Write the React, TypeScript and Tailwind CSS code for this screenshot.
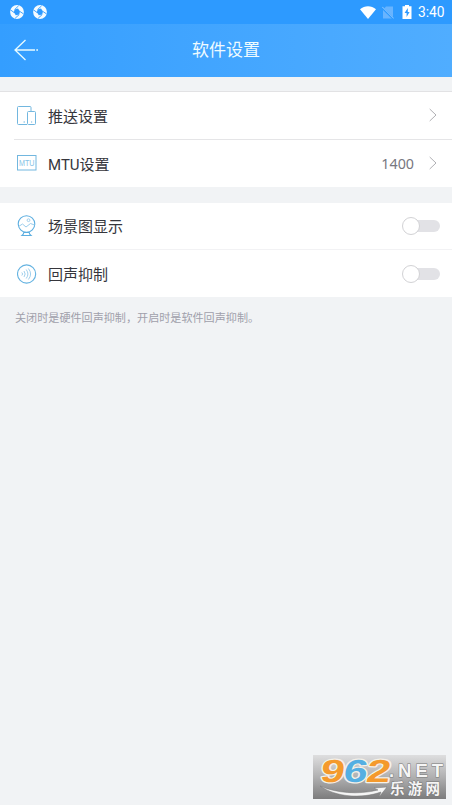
import type { ReactNode } from "react";

function SpinnerMark() {
  return (
    <svg width="14" height="14" viewBox="0 0 14 14">
      <circle cx="7" cy="7" r="6.9" fill="#f4fbff" />
      <path d="M4.6 4.4 8 3.6 10 6.6 9.2 9.6 5.8 10.2 3.9 7.3Z" fill="#2e9aff" />
      <path d="M4.6 4.6 8.6 .8M9.8 6.4 13.4 8.8M9.2 9.6 5.2 13.2M4 7.4.6 5" stroke="#2e9aff" strokeWidth=".9" fill="none" />
    </svg>
  );
}

function StatusBar() {
  return (
    <div className="flex h-6 items-center justify-between bg-[#2d9aff] pl-[10px] pr-[7px]">
      <div className="flex gap-[9px]">
        <SpinnerMark />
        <SpinnerMark />
      </div>
      <div className="flex items-center">
        <svg className="mr-[6px]" width="16" height="13" viewBox="0 0 16 13">
          <path d="M0 3.2C4.6-.9 11.4-.9 16 3.2L8 13Z" fill="white" />
        </svg>
        <svg className="mr-[8px]" width="12" height="13" viewBox="0 0 12 13">
          <path d="M4 .5H11V12.5H1V4Z" fill="#68b4ff" />
          <path d="M0 1.5 11.5 13" stroke="#2d9aff" strokeWidth="2" />
          <path d="M.2 .8 11.8 12.5" stroke="#91c9ff" strokeWidth="1" />
        </svg>
        <svg className="mr-[6px]" width="10" height="14" viewBox="0 0 10 14">
          <path d="M3 0H7V1.3H9.5V14H.5V1.3H3Z" fill="white" />
          <path d="M5.8 3 2.6 8H4.6V12L7.6 7H5.8Z" fill="#2d9aff" />
        </svg>
        <span className="w-[27px] whitespace-nowrap font-['Roboto',sans-serif] text-[13.8px] leading-6 text-white">3:40</span>
      </div>
    </div>
  );
}

function Header() {
  return (
    <header className="flex h-[53px] items-center bg-linear-to-r from-[#349eff] to-[#50adff] pb-[2px] pl-[14px] pr-[14px]">
      <svg width="25" height="22" viewBox="0 0 25 22" fill="none" stroke="#e9fcff" strokeWidth="1.3">
        <path d="M11.5 1 1 11 11.5 21M1 11H21M22.3 11H24" />
      </svg>
      <h1 className="flex-1 pr-[25px] text-center text-[17px] leading-6 text-[#effbff]">软件设置</h1>
    </header>
  );
}

function DevicesIcon() {
  return (
    <svg width="20" height="20" viewBox="0 0 20 20" fill="none" stroke="#72b7df">
      <path d="M10 18.5H1.5Q.5 18.5.5 17.5V1.5Q.5.5 1.5.5H13Q14 .5 14 1.5V5" />
      <rect x="10.5" y="5.5" width="8" height="13" rx="1" />
      <path d="M6.5 16H8M14 16H15.2" />
    </svg>
  );
}

function MtuIcon() {
  return (
    <svg width="20" height="20" viewBox="0 0 20 20">
      <rect x=".5" y="1.5" width="18.5" height="14.5" fill="none" stroke="#72b7df" />
      <text x="9.8" y="12" textAnchor="middle" textLength="15.5" lengthAdjust="spacingAndGlyphs" fontFamily="Liberation Sans, sans-serif" fontSize="8.5" fill="#87c3e6">MTU</text>
    </svg>
  );
}

function SceneIcon() {
  return (
    <svg width="20" height="22" viewBox="0 0 20 22" fill="none" stroke="#5caee0">
      <circle cx="9.5" cy="9" r="8.3" strokeWidth="1.1" />
      <path d="M1.5 11.5 5.5 9 9 12 13.5 8.5 17.5 10" stroke="#9bcdec" />
      <circle cx="11.5" cy="5.2" r="1.4" stroke="#a2d0ed" />
      <path d="M6.3 17.5H12.7M6.8 17.5Q6.8 19 5 20.5H14Q12.2 19 12.2 17.5" strokeWidth="1.1" />
    </svg>
  );
}

function EchoIcon() {
  return (
    <svg width="20" height="20" viewBox="0 0 20 20" fill="none" stroke="#65b3e1">
      <circle cx="9.6" cy="10" r="9.1" strokeWidth="1.1" />
      <path d="M4.8 8.5Q6.5 10 4.8 11.5M7 7Q9.3 10 7 13M9.2 5.5Q12.6 10 9.2 14.5M11.4 4.5Q15.8 10 11.4 15.5" stroke="#a0d0ed" />
    </svg>
  );
}

function Chevron() {
  return (
    <svg className="ml-[15px] -translate-y-px" width="8" height="14" viewBox="0 0 8 14" fill="none" stroke="#b0b0b4">
      <path d="M.7 1 7 7 .7 13" />
    </svg>
  );
}

function Toggle() {
  return (
    <button aria-label="切换" className="flex h-[19px] w-[38px] items-center">
      <span className="z-10 h-[18px] w-[18px] shrink-0 rounded-full border border-[#d2d2d5] bg-white" />
      <span className="-ml-[7px] h-[12px] w-[27px] rounded-r-full bg-[#e2e2e6]" />
    </button>
  );
}

function Row({ icon, label, children }: { icon: ReactNode; label: string; children: ReactNode }) {
  return (
    <div className="flex h-full items-center pl-[17px] pr-[15px]">
      <span className="mr-[11px] w-5 shrink-0">{icon}</span>
      <span className="flex-1 pt-[2px] text-[15px] leading-6 text-[#36363c]">{label}</span>
      {children}
    </div>
  );
}

function Watermark() {
  return (
    <svg className="absolute bottom-[6px] right-[6px]" width="134" height="44" viewBox="0 0 134 44">
      <defs>
        <linearGradient id="plate" x2="0" y2="1">
          <stop stopColor="#dededf" />
          <stop offset=".5" stopColor="#b0b0b1" />
          <stop offset="1" stopColor="#7c7c7d" />
        </linearGradient>
      </defs>
      <rect x="1" width="133" height="44" fill="url(#plate)" />
      <path d="M8 31C24 42 49 44 69 37L67 42 75 32 62 33 66 35C46 40 24 38 8 31Z" fill="#f5f5f5" stroke="#777" strokeWidth=".5" />
      <g transform="translate(5 0) skewX(-9)" fontFamily="Liberation Sans, sans-serif" fontWeight="bold" fontSize="32" stroke="#f5f1e9" strokeWidth="2.4" strokeLinejoin="round" paintOrder="stroke">
        <text x="6.5" y="27" fill="#f49a2d" textLength="24" lengthAdjust="spacingAndGlyphs">9</text>
        <text x="29.5" y="27" fill="#55afe2" textLength="24" lengthAdjust="spacingAndGlyphs">6</text>
        <text x="52.5" y="27" fill="#f49a2d" textLength="24" lengthAdjust="spacingAndGlyphs">2</text>
      </g>
      <g stroke="#777" strokeWidth="1" paintOrder="stroke" fill="#f5f5f5" fontWeight="bold">
        <text x="77" y="22" fontFamily="Liberation Sans, sans-serif" fontSize="18.5" textLength="54">.NET</text>
        <text x="78" y="39" fontFamily="Noto Sans CJK SC, sans-serif" fontSize="14.5" textLength="50">乐游网</text>
      </g>
    </svg>
  );
}

export default function App() {
  return (
    <div className="relative flex h-[805px] w-[452px] flex-col overflow-hidden bg-[#f1f3f5] font-['Roboto','Noto_Sans_CJK_SC',sans-serif]">
      <StatusBar />
      <Header />
      <main>
        <section className="mt-[14px] border-t border-[#e2e2e4] bg-white">
          <div className="h-[47px]">
            <Row icon={<DevicesIcon />} label="推送设置"><Chevron /></Row>
          </div>
          <div className="ml-[14px] h-px bg-[#e5e5e7]" />
          <div className="h-[47px]">
            <Row icon={<MtuIcon />} label="MTU设置">
              <span className="font-['Noto_Sans',sans-serif] text-[14.3px] leading-6 text-[#77777f]">1400</span>
              <Chevron />
            </Row>
          </div>
        </section>
        <section className="mt-4 bg-white">
          <div className="h-[46px]">
            <Row icon={<SceneIcon />} label="场景图显示"><div className="-mr-[3px]"><Toggle /></div></Row>
          </div>
          <div className="h-px bg-[#f2f2f4]" />
          <div className="h-[47px]">
            <Row icon={<EchoIcon />} label="回声抑制"><div className="-mr-[3px]"><Toggle /></div></Row>
          </div>
        </section>
        <p className="px-[15px] pt-[12px] text-[11.1px] leading-5 text-[#a0a0ab]">关闭时是硬件回声抑制，开启时是软件回声抑制。</p>
      </main>
      <Watermark />
    </div>
  );
}
